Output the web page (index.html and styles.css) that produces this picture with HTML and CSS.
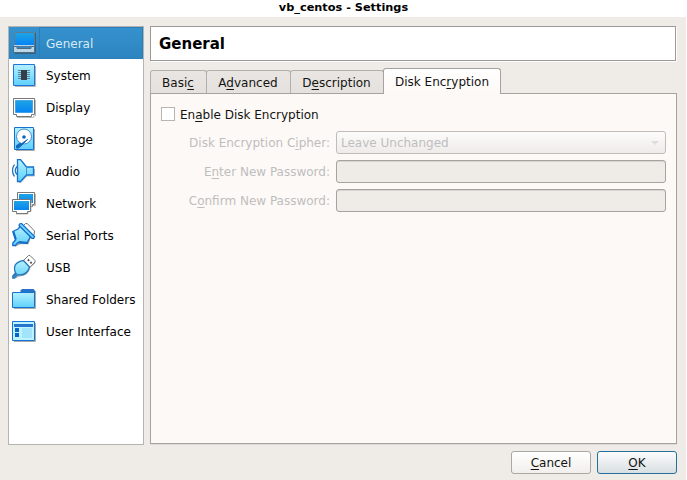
FILE: index.html
```html
<!DOCTYPE html>
<html lang="en">
<head>
<meta charset="utf-8">
<title>vb_centos - Settings</title>
<link rel="stylesheet" href="styles.css">
</head>
<body>
<svg width="0" height="0" class="defs">
  <defs>
    <linearGradient id="cyan" x1="0" y1="0" x2="0" y2="1"><stop offset="0" stop-color="#b5f1fd"/><stop offset="1" stop-color="#5fd0fd"/></linearGradient>
    <linearGradient id="screen" x1="0" y1="0" x2="0" y2="1"><stop offset="0" stop-color="#1fa4e4"/><stop offset="1" stop-color="#0683f5"/></linearGradient>
  </defs>
</svg>
<header class="titlebar">vb_centos - Settings</header>
<main class="dialog">
  <nav class="sidebar">
    <div class="item selected">
      <svg viewBox="0 0 24 24"><path d="M3 22.500H23.500V2" fill="none" stroke="#36617f"/><path d="M2.500 1.500h20v14h-20z" fill="#bcdcee" stroke="#5b7c92"/><path d="M3 2h19v12H3z" fill="url(#screen)"/><path d="M1.500 15.500H5v2h14v-2h3.500v6h-21z" fill="#bad7e9" stroke="#4b6c82"/><path d="M2 14.500h20" stroke="#bad7e9"/></svg>
      <span>General</span>
    </div>
    <div class="item">
      <svg viewBox="0 0 24 24"><path d="M3 23.500h20.500V3" fill="none" stroke="#b3b3b3"/><path d="M1.500 1.500h21v21h-21z" fill="url(#cyan)" stroke="#1e76dc"/><path d="M6 7.500h12M6 9.500h12M6 11.500h12M6 13.500h12M6 15.500h12" stroke="#5686a0"/><path d="M9 7h6v10H9z" fill="#383b48"/></svg>
      <span>System</span>
    </div>
    <div class="item">
      <svg viewBox="0 0 24 24"><path d="M5 22.500h16.500V21h2V5" fill="none" stroke="#bbb"/><path d="M1.500 3.500h21v16h-3v2h-15v-2h-3z" fill="#fff" stroke="#777"/><path d="M3.500 5.500h17v12h-17z" fill="url(#screen)" stroke="#168be0" stroke-width=".6"/></svg>
      <span>Display</span>
    </div>
    <div class="item">
      <svg viewBox="0 0 24 24"><path d="M4 23.500h18.500V2" fill="none" stroke="#aaa"/><path d="M2.500.500h19v22h-19z" fill="url(#cyan)" stroke="#1672d1"/><circle cx="12" cy="9.500" r="7.500" fill="#fff" stroke="#438ac9"/><circle cx="12" cy="10" r="1.800" fill="#0865c5"/><path d="M15.500 12.500 9 19q-3 3-4.500 2v-2.500l3-2 2 .2z" fill="#1668bc" stroke="#1668bc"/></svg>
      <span>Storage</span>
    </div>
    <div class="item">
      <svg viewBox="0 0 24 24"><path d="M7 23.500h2l6-6.500h7.500v-7" fill="none" stroke="#bbb"/><path d="M2.500 5.500q-4 6 0 12M5 7.500q-3.500 4 0 8" fill="none" stroke="#2375bd" stroke-width="1.300"/><path d="M5.500.500h3l6 7.500h7v8h-7l-6 6.500h-3z" fill="url(#cyan)" stroke="#1672cc" stroke-width="1.300"/><path d="M14.500 8v8" stroke="#3d95cc"/></svg>
      <span>Audio</span>
    </div>
    <div class="item">
      <svg viewBox="0 0 24 24"><path d="M23.500 3v11.500H20" fill="none" stroke="#bbb"/><path d="M5.500 1.500h17v12h-2v2h-14v-2h-1z" fill="#fff" stroke="#777"/><path d="M7 3h14v9H7z" fill="url(#screen)"/><path d="M4 23h12v-2.500h3V9" fill="none" stroke="#bbb"/><path d="M.500 8.500h18v12h-3v2h-11v-2h-4z" fill="#fff" stroke="#777"/><path d="M2 10h15v9H2z" fill="url(#screen)"/></svg>
      <span>Network</span>
    </div>
    <div class="item">
      <svg viewBox="0 0 24 24"><path d="m11.500 2.500 2-2 2 .2 7 7.300-.5 4" fill="#fff" stroke="#777"/><path d="M3 23 8 20.500h8l2-6 5-1" fill="none" stroke="#aaa" stroke-width="1.500"/><path d="M9 2.500 6 6 .8 8.500 3.500 17 .8 20v2.500h2.500L6 19.500l9 .5 3.500-6.500z" fill="url(#cyan)" stroke="#116dcc" stroke-width="1.300"/><path d="m7.500 1 2-.5 13 13-.8 1.800H20L7 2.500z" fill="#76d9fd" stroke="#116dcc" stroke-width="1.200"/><path d="m1.500 8.500 2.500 8M7 19l9 1" stroke="#116dcc" stroke-width="1.800"/></svg>
      <span>Serial Ports</span>
    </div>
    <div class="item">
      <svg viewBox="0 0 24 24"><path d="m11.500 5.500 5-5h1.500l5 5v1.500l-5.500 5.500z" fill="#fff" stroke="#777"/><path d="m15.800 4.500 1.400 1.400M18.300 7l1.400 1.400" stroke="#555" stroke-width="1.800"/><path d="M3.500 23 7 21q9 0 11-8.500l5.500-5" fill="none" stroke="#aaa"/><path d="m11.500 5.500 6 6.500q-2 8-10 8l-2-.2-3 3.200H.800v-2L3.500 18Q-.5 7.500 11.500 5.500z" fill="url(#cyan)" stroke="#2878b8" stroke-width="1.300"/><path d="m1.200 22 3.500-3.700" stroke="#2878b8" stroke-width="1.600"/></svg>
      <span>USB</span>
    </div>
    <div class="item">
      <svg viewBox="0 0 24 24"><path d="M2 21.500h21.500V4" fill="none" stroke="#aaa"/><path d="M8.500 5V3.500L10 2h11.500L23 3.500V7H8.500z" fill="#2872c9"/><path d="M.500 5.500h22v15H.500z" fill="url(#cyan)" stroke="#1771ce"/></svg>
      <span>Shared Folders</span>
    </div>
    <div class="item">
      <svg viewBox="0 0 24 24"><path d="M2 22.500h21.500V4" fill="none" stroke="#aaa"/><path d="M.500 2.500h22v19H.500z" fill="#bdf3fd" stroke="#1771d4"/><path d="M2 5h19v3H2z" fill="#2574cd"/><path d="M3 9h4v4H3zM3 14h4v4H3z" fill="#0666cf"/><path d="M10 9h10v10H10z" fill="#a3e4fd"/></svg>
      <span>User Interface</span>
    </div>
  </nav>
  <section class="content">
    <h1 class="heading">General</h1>
    <div class="tabs">
      <div class="tab basic">Basi<u>c</u></div>
      <div class="tab advanced">A<u>d</u>vanced</div>
      <div class="tab description">D<u>e</u>scription</div>
      <div class="tab active">Disk Enc<u>r</u>yption</div>
    </div>
    <div class="panel">
      <label class="check"><span class="box"></span><span>En<u>a</u>ble Disk Encryption</span></label>
      <div class="form">
        <span class="label">Disk Encryption C<u>i</u>pher:</span>
        <div class="combo"><span>Leave Unchanged</span><svg width="8" height="4" viewBox="0 0 8 4"><path d="M0 0h8L4 4z" fill="#dedcda"/></svg></div>
        <span class="label">E<u>n</u>ter New Password:</span>
        <div class="field"></div>
        <span class="label">C<u>o</u>nfirm New Password:</span>
        <div class="field"></div>
      </div>
    </div>
    <footer class="actions">
      <div class="button"><span><u>C</u>ancel</span></div>
      <div class="button primary"><span><u>O</u>K</span></div>
    </footer>
  </section>
</main>
</body>
</html>
```
FILE: styles.css
```css
* { box-sizing: border-box; }
body {
  margin: 0;
  width: 687px;
  height: 480px;
  overflow: hidden;
  background: #fff;
  color: #141312;
  font: 12px/14px "DejaVu Sans", sans-serif;
}
.defs { display: block; }
u {
  text-decoration: underline;
  text-decoration-thickness: 1px;
  text-underline-offset: 2px;
  text-decoration-skip-ink: none;
}
.titlebar {
  height: 17px;
  text-align: center;
  font-size: 11.3px;
  line-height: 15px;
  font-weight: bold;
  color: #000;
}
.dialog {
  display: flex;
  gap: 6px;
  width: 686px;
  height: 463px;
  padding: 9px 9px 6px 8px;
  background: #efebe7;
}
.sidebar {
  width: 136px;
  height: 419px;
  border: 1px solid #b5b2af;
  background: #fff;
  color: #000;
}
.item {
  display: flex;
  align-items: center;
  height: 32px;
  padding-left: 3px;
  gap: 10px;
  white-space: nowrap;
}
.item svg { width: 24px; height: 24px; flex: none; }
.item span { padding-top: 2px; }
.selected {
  background: linear-gradient(#3592ce, #2c84bf);
  color: #d5e9f6;
}
.selected span {
  flex: 1;
  height: 32px;
  margin-left: -7px;
  padding: 9px 0 0 6px;
  border: 1px solid #2980b9;
}
.content {
  display: flex;
  flex-direction: column;
  width: 527px;
}
.heading {
  width: 526px;
  height: 35px;
  margin: 0;
  padding: 0 8px;
  border: 1px solid #9c9996;
  box-shadow: 1px 1px 0 #fff;
  background: #fff;
  font-size: 15px;
  line-height: 34px;
  color: #000;
}
.tabs {
  display: flex;
  align-items: flex-end;
  height: 33px;
  margin-bottom: -1px;
}
.tab {
  height: 24px;
  margin-right: -1px;
  border: 1px solid #b3afac;
  border-bottom-color: #a5a29f;
  border-radius: 3px 3px 0 0;
  background: linear-gradient(#e9e5e2, #e5e1de);
  line-height: 24px;
  text-align: center;
  white-space: nowrap;
}
.basic { width: 57px; padding-right: 1px; }
.advanced { width: 85px; padding-right: 1px; }
.description { width: 94px; padding-right: 1px; }
.tab.active {
  width: 118px;
  height: 26px;
  position: relative;
  border-color: #a5a29f;
  border-bottom: 0;
  background: linear-gradient(#fff, #fdf9f6);
  line-height: 26px;
}
.panel {
  height: 351px;
  padding: 13px 10px;
  border: 1px solid #a5a29f;
  background: #fdf9f6;
  box-shadow: 0 1px 0 #dedad7;
}
.check {
  display: flex;
  align-items: center;
  gap: 5px;
  height: 14px;
}
.check span:last-child { padding-top: 1px; }
.box {
  width: 14px;
  height: 14px;
  border: 1px solid #b8b5b2;
  background: #fff;
}
.form {
  display: grid;
  grid-template-columns: 169px 330px;
  grid-auto-rows: 23px;
  gap: 6px;
  margin-top: 10px;
  color: #bebebe;
}
.label { text-align: right; line-height: 24px; white-space: nowrap; }
.combo {
  display: flex;
  justify-content: space-between;
  align-items: center;
  padding: 1px 6px 0 4px;
  border: 1px solid #c0bcb9;
  border-radius: 3px;
  background: linear-gradient(#fdfcfb, #eeebe9);
}
.field {
  border: 1px solid #a5a29f;
  border-radius: 3px;
  background: #efebe7;
  box-shadow: inset 0 1px 0 #d8d4d1;
}
.actions {
  display: flex;
  justify-content: flex-end;
  gap: 6px;
  margin-top: 7px;
}
.button {
  width: 80px;
  height: 23px;
  border: 1px solid #aaa7a4;
  border-radius: 3px;
  background: linear-gradient(#fff, #f1efec);
  line-height: 23px;
  text-align: center;
}
.primary {
  border-color: #256f9d;
  background: linear-gradient(#fcfcfc, #d8dfe2);
}
```
